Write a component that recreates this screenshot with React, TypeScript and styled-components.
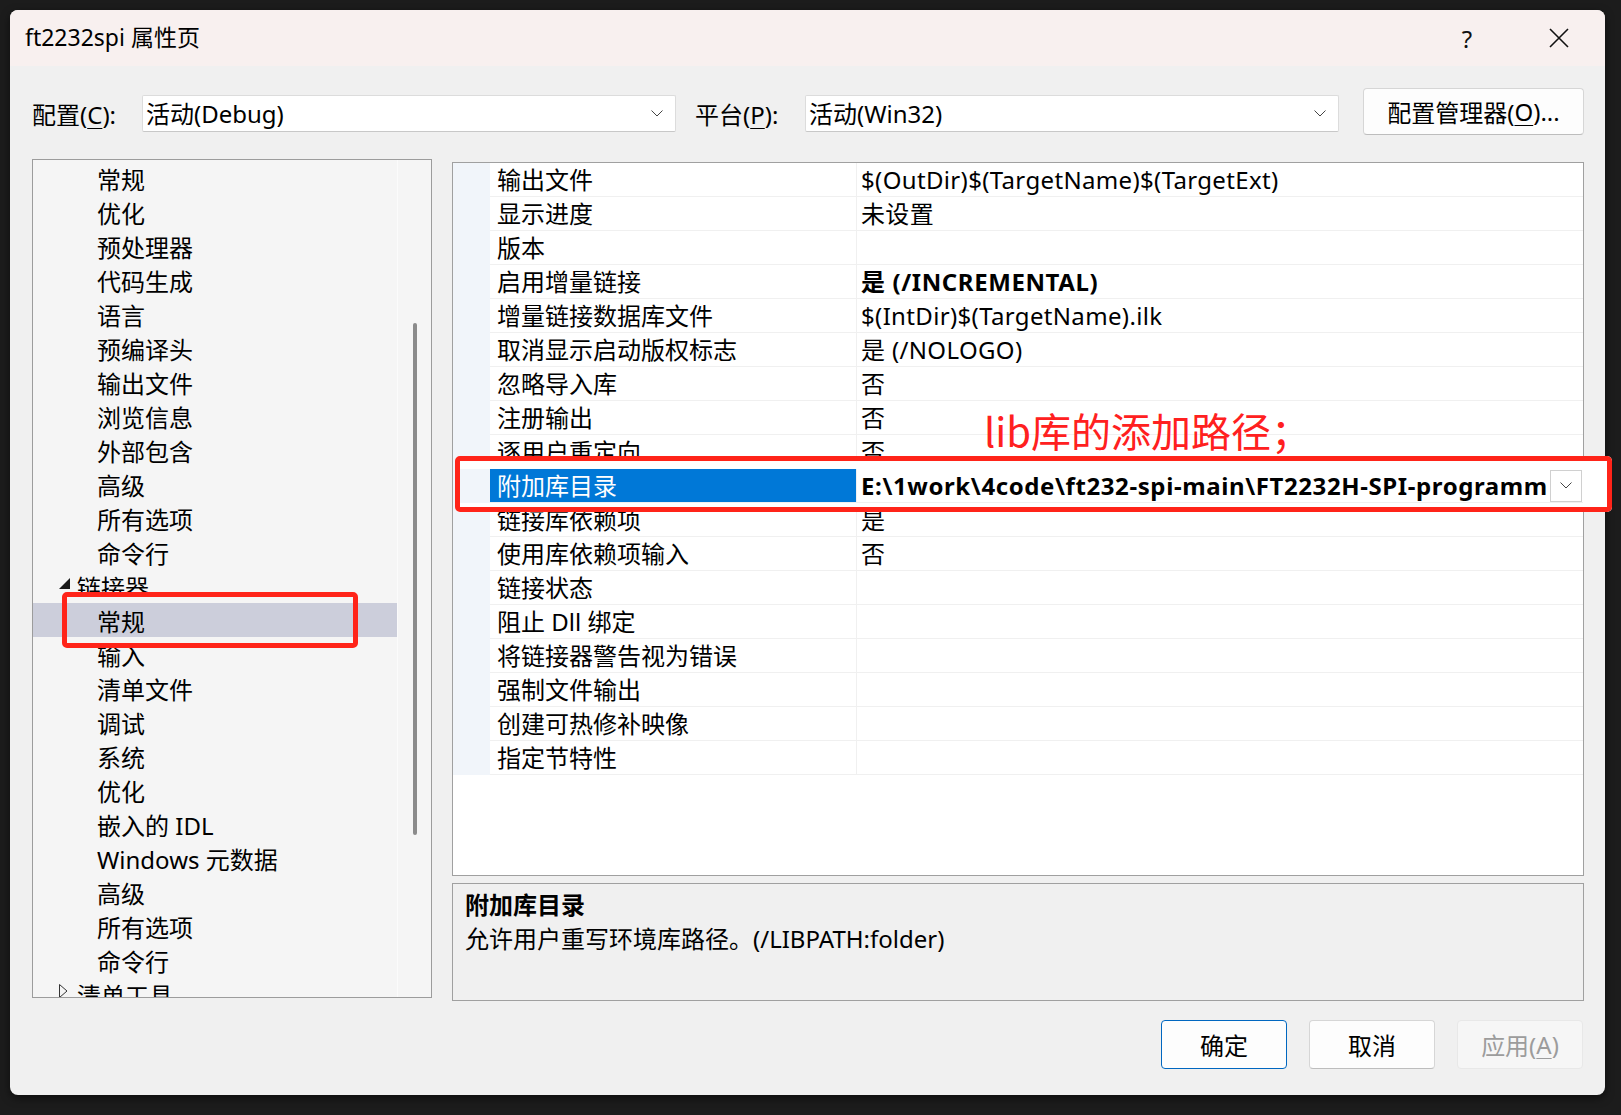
import React from "react";
import styled, { createGlobalStyle } from "styled-components";

const UI = `"Noto Sans", "Noto Sans CJK SC", sans-serif`;
const CJK = `"Noto Sans CJK SC", "Noto Sans", sans-serif`;

const GlobalStyle = createGlobalStyle`
  html, body { margin: 0; padding: 0; background: #1c1c1c; }
  body { width: 1621px; height: 1115px; overflow: hidden; }
  * { box-sizing: border-box; }
`;

const Screen = styled.div`
  width: 1621px;
  height: 1115px;
  background: #1c1c1c;
  padding: 10px 0 0 10px;
  overflow: hidden;
`;

const Dialog = styled.div`
  position: relative;
  z-index: 0;
  width: 1595px;
  height: 1085px;
  background: #f0f0f0;
  border-radius: 8px;
  box-shadow: 0 3px 8px rgba(0, 0, 0, 0.55);
  display: flex;
  flex-direction: column;
`;

const TitleBar = styled.div`
  height: 56px;
  flex: 0 0 56px;
  background: #f8f0ef;
  border-radius: 8px 8px 0 0;
  display: flex;
  align-items: center;
  padding: 0 0 0 15px;
`;

const Title = styled.div`
  flex: 1;
  font-family: ${UI};
  font-size: 23px;
  color: #000;
  line-height: 1.3;
`;

const TitleButton = styled.div`
  width: 92px;
  height: 56px;
  display: flex;
  align-items: center;
  justify-content: center;
  font-family: ${UI};
  font-size: 24px;
  color: #111;
`;

const Body = styled.div`
  flex: 1;
  display: flex;
  flex-direction: column;
  padding: 22px 21px 26px 22px;
`;

const Toolbar = styled.div`
  height: 47px;
  display: flex;
  align-items: center;
`;

const Label = styled.div<{ $gap?: number }>`
  font-family: ${UI};
  font-size: 24px;
  color: #000;
  margin-left: ${(p) => p.$gap ?? 0}px;
  width: 110px;
  flex: 0 0 auto;
  padding-top: 4px;
  u { text-underline-offset: 4px; text-decoration-thickness: 1px; }
`;

const Combo = styled.div`
  width: 534px;
  height: 37px;
  margin-top: 4px;
  background: #fff;
  border: 1px solid #dcdcdc;
  border-bottom-color: #c8c8c8;
  border-radius: 2px;
  display: flex;
  align-items: center;
  padding: 0 12px 0 3px;
  font-family: ${UI};
  font-size: 24px;
  color: #000;
`;

const ComboText = styled.span`
  flex: 1;
  line-height: 1.3;
`;

const PushButton = styled.div<{ $variant?: "default" | "primary" | "disabled"; $w: number; $h: number }>`
  width: ${(p) => p.$w}px;
  height: ${(p) => p.$h}px;
  border-radius: 4px;
  display: flex;
  align-items: center;
  justify-content: center;
  font-family: ${UI};
  font-size: 24px;
  background: ${(p) => (p.$variant === "disabled" ? "#f6f6f6" : "#fdfdfd")};
  color: ${(p) => (p.$variant === "disabled" ? "#9c9c9c" : "#000")};
  border: 1px solid
    ${(p) => (p.$variant === "primary" ? "#0067c0" : p.$variant === "disabled" ? "#e8e8e8" : "#d6d6d6")};
  border-bottom-color: ${(p) =>
    p.$variant === "primary" ? "#0067c0" : p.$variant === "disabled" ? "#e8e8e8" : "#bdbdbd"};
  u { text-underline-offset: 4px; text-decoration-thickness: 1px; }
`;

const Spacer = styled.div`
  flex: 1;
`;

const Main = styled.div`
  margin-top: 24px;
  height: 842px;
  display: flex;
  gap: 20px;
`;

const Tree = styled.div`
  width: 400px;
  height: 839px;
  border: 1px solid #9c9c9c;
  background: #f5f5f5;
  display: flex;
`;

const TreeList = styled.div`
  flex: 1;
  overflow: hidden;
  padding-top: 1px;
`;

const TreeRow = styled.div<{ $level: number; $selected?: boolean }>`
  position: relative;
  z-index: ${(p) => (p.$selected ? 2 : "auto")};
  height: 34px;
  display: flex;
  align-items: center;
  padding-left: ${(p) => (p.$level === 1 ? 26 : 64)}px;
  background: ${(p) => (p.$selected ? "#cccedb" : "transparent")};
  font-family: ${UI};
  font-size: 24px;
  color: #000;
  white-space: nowrap;
`;

const Expander = styled.span`
  width: 18px;
  display: flex;
  align-items: center;
  margin-top: -6px;
`;

const ScrollTrack = styled.div`
  width: 34px;
  border-left: 1px solid #fbfbfb;
  display: flex;
  flex-direction: column;
  align-items: center;
  padding-top: 163px;
`;

const ScrollThumb = styled.div`
  width: 4px;
  height: 512px;
  border-radius: 2px;
  background: #8b8b8b;
`;

const RightCol = styled.div`
  flex: 1;
  padding-top: 3px;
  display: flex;
  flex-direction: column;
  gap: 7px;
`;

const Grid = styled.div`
  height: 714px;
  border: 1px solid #a0a0a0;
  background: #fff;
  overflow: hidden;
`;

const GridRow = styled.div<{ $selected?: boolean }>`
  position: relative;
  z-index: ${(p) => (p.$selected ? 2 : "auto")};
  height: 34px;
  display: grid;
  grid-template-columns: 37px 366px 1fr;
  font-family: ${UI};
  font-size: 24px;
  color: #000;
`;

const Gutter = styled.div`
  background: #f1f5fa;
`;

const NameCell = styled.div<{ $selected?: boolean }>`
  display: flex;
  align-items: center;
  padding-left: 7px;
  border-bottom: 1px solid #f0f0f0;
  background: ${(p) => (p.$selected ? "#0078d7" : "#fff")};
  color: ${(p) => (p.$selected ? "#fff" : "#000")};
  white-space: nowrap;
  line-height: 1.3;
`;

const ValueCell = styled.div<{ $bold?: boolean }>`
  display: flex;
  align-items: center;
  padding-left: 4px;
  border-left: 1px solid #f0f0f0;
  border-bottom: 1px solid #f0f0f0;
  font-weight: ${(p) => (p.$bold ? 700 : 400)};
  letter-spacing: ${(p) => (p.$bold ? 0.6 : 0.35)}px;
  white-space: nowrap;
  min-width: 0;
`;

const ValueText = styled.span`
  flex: 1;
  overflow: hidden;
  min-width: 0;
  line-height: 1.3;
`;

const DropButton = styled.div`
  width: 32px;
  height: 32px;
  margin-right: 1px;
  flex: 0 0 32px;
  border: 1px solid #d0d0d0;
  background: #fff;
  display: flex;
  align-items: center;
  justify-content: center;
`;

const Description = styled.div`
  height: 118px;
  border: 1px solid #a0a0a0;
  background: #f0f0f0;
  padding: 4px 12px;
  font-family: ${UI};
  font-size: 24px;
  color: #000;
`;

const DescTitle = styled.div`
  font-weight: 700;
  line-height: 34px;
`;

const DescLine = styled.div`
  line-height: 34px;
`;

const Footer = styled.div`
  margin-top: 19px;
  display: flex;
  justify-content: flex-end;
  gap: 22px;
  padding-right: 1px;
`;

const AnnotationMask = styled.div<{ $x: number; $y: number; $w: number; $h: number; $fill: string }>`
  position: absolute;
  z-index: 1;
  left: ${(p) => p.$x}px;
  top: ${(p) => p.$y}px;
  width: ${(p) => p.$w}px;
  height: ${(p) => p.$h}px;
  background: ${(p) => p.$fill};
  border-radius: 5px;
`;

const AnnotationFrame = styled.div<{ $x: number; $y: number; $w: number; $h: number }>`
  position: absolute;
  z-index: 3;
  left: ${(p) => p.$x}px;
  top: ${(p) => p.$y}px;
  width: ${(p) => p.$w}px;
  height: ${(p) => p.$h}px;
  border: 5px solid #ff2419;
  border-radius: 5px;
`;

const AnnotationText = styled.div`
  position: absolute;
  z-index: 3;
  left: 974px;
  top: 400px;
  font-family: ${CJK};
  font-size: 40px;
  line-height: 40px;
  color: #ff2020;
  white-space: nowrap;
`;

const Chevron = () => (
  <svg width="12" height="7" viewBox="0 0 12 7">
    <path d="M0.5 0.5 L6 6 L11.5 0.5" fill="none" stroke="#444" strokeWidth="1" />
  </svg>
);

const CloseIcon = () => (
  <svg width="20" height="20" viewBox="0 0 20 20">
    <path d="M1 1 L19 19 M19 1 L1 19" stroke="#111" strokeWidth="1.6" />
  </svg>
);

const ExpandedGlyph = () => (
  <svg width="11" height="11" viewBox="0 0 11 11">
    <polygon points="11,0 11,11 0,11" fill="#1a1a1a" />
  </svg>
);

const CollapsedGlyph = () => (
  <svg width="9" height="14" viewBox="0 0 9 14">
    <polygon points="0.5,0.5 8,7 0.5,13.5" fill="none" stroke="#333" strokeWidth="1" />
  </svg>
);

type TreeItem = { text: string; level: 1 | 2; expander?: "open" | "closed"; selected?: boolean };

const treeItems: TreeItem[] = [
  { text: "常规", level: 2 },
  { text: "优化", level: 2 },
  { text: "预处理器", level: 2 },
  { text: "代码生成", level: 2 },
  { text: "语言", level: 2 },
  { text: "预编译头", level: 2 },
  { text: "输出文件", level: 2 },
  { text: "浏览信息", level: 2 },
  { text: "外部包含", level: 2 },
  { text: "高级", level: 2 },
  { text: "所有选项", level: 2 },
  { text: "命令行", level: 2 },
  { text: "链接器", level: 1, expander: "open" },
  { text: "常规", level: 2, selected: true },
  { text: "输入", level: 2 },
  { text: "清单文件", level: 2 },
  { text: "调试", level: 2 },
  { text: "系统", level: 2 },
  { text: "优化", level: 2 },
  { text: "嵌入的 IDL", level: 2 },
  { text: "Windows 元数据", level: 2 },
  { text: "高级", level: 2 },
  { text: "所有选项", level: 2 },
  { text: "命令行", level: 2 },
  { text: "清单工具", level: 1, expander: "closed" },
];

type Prop = { name: string; value?: string; bold?: boolean; selected?: boolean };

const props: Prop[] = [
  { name: "输出文件", value: "$(OutDir)$(TargetName)$(TargetExt)" },
  { name: "显示进度", value: "未设置" },
  { name: "版本" },
  { name: "启用增量链接", value: "是 (/INCREMENTAL)", bold: true },
  { name: "增量链接数据库文件", value: "$(IntDir)$(TargetName).ilk" },
  { name: "取消显示启动版权标志", value: "是 (/NOLOGO)" },
  { name: "忽略导入库", value: "否" },
  { name: "注册输出", value: "否" },
  { name: "逐用户重定向", value: "否" },
  { name: "附加库目录", value: "E:\\1work\\4code\\ft232-spi-main\\FT2232H-SPI-programm", bold: true, selected: true },
  { name: "链接库依赖项", value: "是" },
  { name: "使用库依赖项输入", value: "否" },
  { name: "链接状态" },
  { name: "阻止 Dll 绑定" },
  { name: "将链接器警告视为错误" },
  { name: "强制文件输出" },
  { name: "创建可热修补映像" },
  { name: "指定节特性" },
];

export default function App() {
  return (
    <>
      <GlobalStyle />
      <Screen>
        <Dialog>
          <TitleBar>
            <Title>ft2232spi 属性页</Title>
            <TitleButton>?</TitleButton>
            <TitleButton>
              <CloseIcon />
            </TitleButton>
          </TitleBar>
          <Body>
            <Toolbar>
              <Label>
                配置(<u>C</u>):
              </Label>
              <Combo>
                <ComboText>活动(Debug)</ComboText>
                <Chevron />
              </Combo>
              <Label $gap={19}>
                平台(<u>P</u>):
              </Label>
              <Combo>
                <ComboText>活动(Win32)</ComboText>
                <Chevron />
              </Combo>
              <Spacer />
              <PushButton $w={221} $h={47}>
                配置管理器(<u>O</u>)...
              </PushButton>
            </Toolbar>
            <Main>
              <Tree>
                <TreeList>
                  {treeItems.map((it, i) => (
                    <TreeRow key={i} $level={it.level} $selected={it.selected}>
                      {it.expander && (
                        <Expander>{it.expander === "open" ? <ExpandedGlyph /> : <CollapsedGlyph />}</Expander>
                      )}
                      {it.text}
                    </TreeRow>
                  ))}
                </TreeList>
                <ScrollTrack>
                  <ScrollThumb />
                </ScrollTrack>
              </Tree>
              <RightCol>
                <Grid>
                  {props.map((p, i) => (
                    <GridRow key={i} $selected={p.selected}>
                      <Gutter />
                      <NameCell $selected={p.selected}>{p.name}</NameCell>
                      <ValueCell $bold={p.bold}>
                        <ValueText>{p.value ?? ""}</ValueText>
                        {p.selected && (
                          <DropButton>
                            <Chevron />
                          </DropButton>
                        )}
                      </ValueCell>
                    </GridRow>
                  ))}
                </Grid>
                <Description>
                  <DescTitle>附加库目录</DescTitle>
                  <DescLine>允许用户重写环境库路径。(/LIBPATH:folder)</DescLine>
                </Description>
              </RightCol>
            </Main>
            <Footer>
              <PushButton $variant="primary" $w={126} $h={49}>
                确定
              </PushButton>
              <PushButton $w={126} $h={49}>
                取消
              </PushButton>
              <PushButton $variant="disabled" $w={126} $h={49}>
                应用(<u>A</u>)
              </PushButton>
            </Footer>
          </Body>

          <AnnotationMask $x={52} $y={582} $w={296} $h={56} $fill="#f5f5f5" />
          <AnnotationFrame $x={52} $y={582} $w={296} $h={56} />
          <AnnotationMask $x={445} $y={446} $w={1157} $h={56} $fill="#ffffff" />
          <AnnotationFrame $x={445} $y={446} $w={1157} $h={56} />
          <AnnotationText>lib库的添加路径；</AnnotationText>
        </Dialog>
      </Screen>
    </>
  );
}
